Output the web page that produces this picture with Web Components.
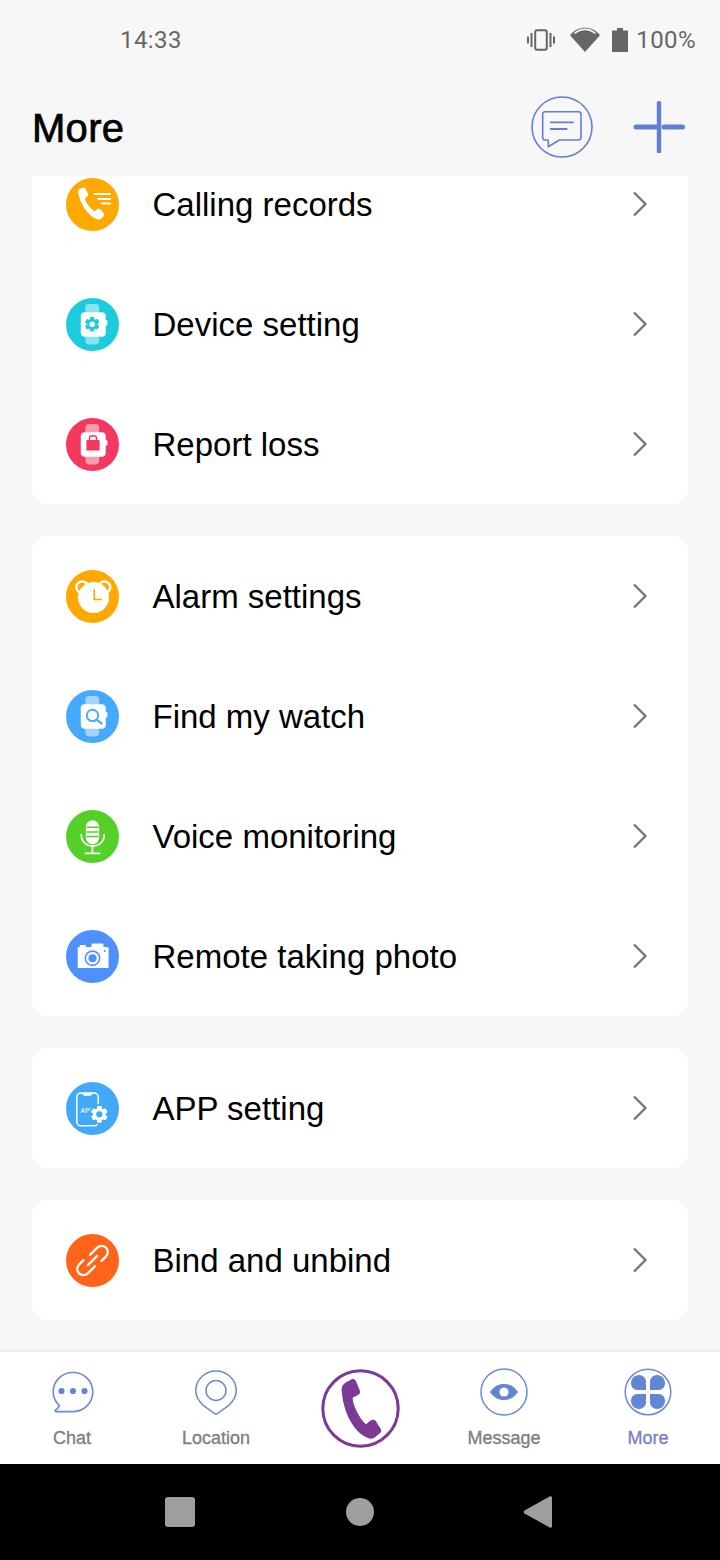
<!DOCTYPE html>
<html>
<head>
<meta charset="utf-8">
<style>
  html, body { margin: 0; padding: 0; background: #f7f7f7; }
  body { font-family: "Liberation Sans", Arial, sans-serif; }
</style>
</head>
<body>
<phone-screen>
  <status-bar slot="status" time="14:33" level="100%"></status-bar>
  <top-header slot="header" heading="More"></top-header>
  <menu-list slot="content" offset="32">
    <menu-card>
      <menu-row icon="calls" label="Calling records"></menu-row>
      <menu-row icon="device" label="Device setting"></menu-row>
      <menu-row icon="loss" label="Report loss"></menu-row>
    </menu-card>
    <menu-card>
      <menu-row icon="alarm" label="Alarm settings"></menu-row>
      <menu-row icon="find" label="Find my watch"></menu-row>
      <menu-row icon="voice" label="Voice monitoring"></menu-row>
      <menu-row icon="photo" label="Remote taking photo"></menu-row>
    </menu-card>
    <menu-card>
      <menu-row icon="app" label="APP setting"></menu-row>
    </menu-card>
    <menu-card>
      <menu-row icon="bind" label="Bind and unbind"></menu-row>
    </menu-card>
  </menu-list>
  <tab-bar slot="tabs">
    <tab-item icon="chat" label="Chat"></tab-item>
    <tab-item icon="location" label="Location"></tab-item>
    <tab-item icon="call"></tab-item>
    <tab-item icon="message" label="Message"></tab-item>
    <tab-item icon="more" label="More" active></tab-item>
  </tab-bar>
  <nav-bar slot="nav"></nav-bar>
</phone-screen>

<script>
const WATCH = (band, body) => `
  <rect x="19" y="6" width="13.5" height="39.5" rx="3.5" fill="${band}"/>
  <rect x="14.5" y="14" width="24.5" height="24" rx="4" fill="#fff"/>
  <rect x="38" y="21.5" width="2.6" height="5.5" rx="1.3" fill="#fff"/>${body}`;

const GEAR = (cx, cy, r, color, hole) => {
  let teeth = '';
  for (let i = 0; i < 6; i++) {
    teeth += `<rect x="${cx - r * 0.36}" y="${cy - r * 1.3}" width="${r * 0.72}" height="${r * 2.6}" rx="${r * 0.14}" fill="${color}" transform="rotate(${i * 60} ${cx} ${cy})"/>`;
  }
  return `${teeth}<circle cx="${cx}" cy="${cy}" r="${r}" fill="${color}"/><circle cx="${cx}" cy="${cy}" r="${r * 0.5}" fill="${hole}"/>`;
};

const MENU_ICONS = {
  calls: ['#ffa800', `
    <g transform="translate(-6 -6) scale(.3333)">
      <path d="M54 62 C52 55 56 50 62 48 L68 46 C72 45 74 47 76 50 L83 65 C84 69 82 71 80 73 L73 78 C77 92 92 110 103 116 L110 109 C113 107 116 107 119 109 L129 122 C131 125 131 128 128 131 L122 137 C118 140 113 141 108 139 C82 128 60 96 54 62 Z" fill="#fff"/>
      <path d="M100 65 H150 M110 80 H150 M122 93 H150" stroke="#fff" stroke-width="6" fill="none"/>
    </g>`],
  device: ['#1ccbdc', WATCH('#8be4ed', GEAR(25.7, 25.7, 5.4, '#1ccbdc', '#fff'))],
  loss: ['#f5385f', WATCH('#fa9cb0', `
    <rect x="20" y="21.5" width="13" height="10.5" rx="1.2" fill="#f5385f"/>
    <path d="M23 22 V20 C23 16.6 30 16.6 30 20 V22" stroke="#f5385f" stroke-width="1.4" fill="none"/>`)],
  alarm: ['#ffa800', `
    <circle cx="16" cy="17" r="5.8" fill="#ffa800" stroke="#fff" stroke-width="2.4"/>
    <circle cx="37.6" cy="17" r="5.8" fill="#ffa800" stroke="#fff" stroke-width="2.4"/>
    <circle cx="27" cy="27" r="15.2" fill="#fff"/>
    <path d="M27.7 19 V29 H35" stroke="#ffa800" stroke-width="1.6" fill="none"/>`],
  find: ['#45aafb', WATCH('#a2d4fd', `
    <circle cx="26" cy="25" r="5.6" fill="none" stroke="#45aafb" stroke-width="1.8"/>
    <path d="M30 29.2 L35 33" stroke="#45aafb" stroke-width="2" stroke-linecap="round"/>`)],
  voice: ['#55d02a', `
    <rect x="19.5" y="10" width="13" height="23.5" rx="6.5" fill="#fff"/>
    <path d="M20 17 H32 M20 21.5 H32 M20 26 H32" stroke="#55d02a" stroke-width="1.5"/>
    <path d="M15 24.5 C15.5 39 37 39 37.5 24.5" stroke="#fff" stroke-width="1.7" fill="none" stroke-linecap="round"/>
    <path d="M26 35 V42.5 M19 42.5 H33" stroke="#fff" stroke-width="1.7" stroke-linecap="round"/>`],
  photo: ['#4d90fe', `
    <path d="M11.5 18 C11.5 17 12 16.7 13 16.7 H25 V14.3 C25 13.8 25.5 13.3 26 13.3 H35.6 C36.2 13.3 36.7 13.8 36.7 14.3 V16.7 H40.5 C41.3 16.7 41.8 17.2 41.8 18 V37.4 H11.5 Z" fill="#fff"/>
    <rect x="13.5" y="14.8" width="6" height="2.4" rx="0.6" fill="#fff"/>
    <circle cx="26" cy="27.7" r="7.8" fill="#4d90fe"/>
    <circle cx="26" cy="27.7" r="6.2" fill="#fff"/>
    <circle cx="26" cy="27.7" r="4" fill="#4d90fe"/>
    <circle cx="38" cy="20.6" r="1" fill="#4d90fe"/>`],
  app: ['#42a9fa', `
    <rect x="10.6" y="10.8" width="21" height="32.2" rx="4" fill="none" stroke="#fff" stroke-width="1.5"/>
    <path d="M16 10.8 H26 C25.6 13.2 24.2 13.6 23.2 13.6 H18.8 C17.8 13.6 16.4 13.2 16 10.8 Z" fill="#fff"/>
    <text x="14.2" y="30.5" font-family="'Liberation Sans', sans-serif" font-size="6.2" font-weight="700" fill="#fff" opacity=".8">APP</text>
    <circle cx="32.7" cy="31.7" r="10" fill="#42a9fa"/>
    ${GEAR(32.7, 31.7, 6.2, '#fff', '#42a9fa')}`],
  bind: ['#ff6418', `
    <path d="M23.5 20.5 L30.4 13.6 C33 11 36.8 11 39.2 13.4 C41.6 15.8 41.6 19.6 39 22.2 L34.8 26.4" fill="none" stroke="#fff" stroke-width="2.2" stroke-linecap="round"/>
    <path d="M28.5 31.5 L21.6 38.4 C19 41 15.2 41 12.8 38.6 C10.4 36.2 10.4 32.4 13 29.8 L17.2 25.6" fill="none" stroke="#fff" stroke-width="2.2" stroke-linecap="round"/>
    <path d="M21.5 30.5 L30.5 21.5" stroke="#fff" stroke-width="2.2" stroke-linecap="round"/>`]
};

const TAB_ICONS = {
  chat: `<svg width="46" height="46" viewBox="0 0 46 46" style="margin-left:2px">
    <path d="M23 3.5 C34 3.5 42.8 12 42.8 23 C42.8 34 34 42.6 23 42.6 H6 C5 42.6 4.8 41.6 5.6 41 C7.2 40 8.6 38.4 9.4 36.6 C5.6 33 3.2 28.4 3.2 23 C3.2 12 12 3.5 23 3.5 Z" fill="none" stroke="#6b8ad6" stroke-width="1.6"/>
    <circle cx="11.5" cy="22" r="3.1" fill="#6484d6"/><circle cx="23" cy="22" r="3.1" fill="#6484d6"/><circle cx="34.5" cy="22" r="3.1" fill="#6484d6"/></svg>`,
  location: `<svg width="46" height="48" viewBox="0 0 46 48">
    <path d="M23 3 C34.2 3 43.2 11.8 43.2 22.6 C43.2 29 40 33.6 35.8 37.4 L24.4 45.6 C23.5 46.2 22.5 46.2 21.6 45.6 L10.2 37.4 C6 33.6 2.8 29 2.8 22.6 C2.8 11.8 11.8 3 23 3 Z" fill="none" stroke="#6b8ad6" stroke-width="1.5"/>
    <circle cx="23" cy="22.5" r="10" fill="none" stroke="#6b8ad6" stroke-width="1.5"/></svg>`,
  call: `<svg width="80" height="80" viewBox="0 0 80 80" style="margin:2px 0 0 2px">
    <circle cx="39.5" cy="39.5" r="37.7" fill="#fff" stroke="#7b3a96" stroke-width="3"/>
    <path transform="translate(-10 -8) scale(.3333)" d="M92 88 C91 76 97 68 108 62 L122 55 C128 53 133 56 135 61 L147 90 C148 95 146 99 142 101 L125 110 C124 130 145 172 165 190 L180 178 C185 175 190 176 194 179 L209 203 C212 208 211 213 207 217 L190 230 C184 234 178 234 170 231 C125 212 96 150 92 88 Z" fill="#7b3a96"/></svg>`,
  message: `<svg width="48" height="48" viewBox="0 0 48 48">
    <circle cx="24" cy="24" r="23" fill="none" stroke="#6b8ad6" stroke-width="1.5"/>
    <path d="M10 24 C13.5 18.6 18.4 16 24 16 C29.6 16 34.5 18.6 38 24 C34.5 29.4 29.6 32 24 32 C18.4 32 13.5 29.4 10 24 Z" fill="#6484d6"/>
    <circle cx="24" cy="24" r="4.6" fill="#fff"/></svg>`,
  more: `<svg width="48" height="48" viewBox="0 0 48 48">
    <circle cx="24" cy="24" r="22.8" fill="none" stroke="#6b8ad6" stroke-width="1.5"/>
    <path d="M22 22 H13.5 C9.5 22 7 19 7 15 C7 10.6 10.6 7 15 7 C19 7 22 10 22 14 Z" fill="#6484d6"/>
    <path d="M26 22 H34.5 C38.5 22 41 19 41 15 C41 10.6 37.4 7 33 7 C29 7 26 10 26 14 Z" fill="#6484d6"/>
    <path d="M22 26 H13.5 C9.5 26 7 29 7 33 C7 37.4 10.6 41 15 41 C19 41 22 38 22 34 Z" fill="#6484d6"/>
    <path d="M26 26 H34.5 C38.5 26 41 29 41 33 C41 37.4 37.4 41 33 41 C29 41 26 38 26 34 Z" fill="#6484d6"/></svg>`
};

class PhoneScreen extends HTMLElement {
  constructor() {
    super();
    this.attachShadow({ mode: 'open' });
    this.shadowRoot.innerHTML = `
      <style>
        :host { display: flex; flex-direction: column; width: 720px; height: 1560px; background: #f7f7f7; overflow: hidden; }
        .content { flex: 1; min-height: 0; display: flex; flex-direction: column; }
      </style>
      <slot name="status"></slot>
      <slot name="header"></slot>
      <div class="content"><slot name="content"></slot></div>
      <slot name="tabs"></slot>
      <slot name="nav"></slot>`;
  }
}

class StatusBar extends HTMLElement {
  constructor() {
    super();
    this.attachShadow({ mode: 'open' });
  }
  connectedCallback() {
    this.shadowRoot.innerHTML = `
      <style>
        :host { display: flex; align-items: center; height: 80px; padding: 0 24px 0 120px; color: #666; font-family: Roboto, sans-serif; font-size: 24px; letter-spacing: .4px; box-sizing: border-box; }
        .time { flex: 1; }
        .icons { display: flex; align-items: center; }
        svg { display: block; }
      </style>
      <span class="time">${this.getAttribute('time')}</span>
      <div class="icons">
        <svg width="28" height="22" viewBox="0 0 28 22" style="margin-right:15px">
          <rect x="8.2" y="1.2" width="11.6" height="19.6" rx="2" fill="none" stroke="#666" stroke-width="2"/>
          <path d="M4.5 4 V18 M1 7.5 V14.5 M23.5 4 V18 M27 7.5 V14.5" stroke="#666" stroke-width="2"/>
        </svg>
        <svg width="30" height="26" viewBox="0 0 30 26" style="margin-right:12px">
          <path d="M15 25 L0 8.2 C8 -1.6 22 -1.6 30 8.2 Z" fill="#666"/>
          <path d="M4.6 6.4 C10.6 1 19.4 1 25.4 6.4" stroke="#f7f7f7" stroke-width="1.6" fill="none"/>
        </svg>
        <svg width="16" height="24" viewBox="0 0 16 24" style="margin-right:8px">
          <path d="M5 0 H11 V2.5 H16 V24 H0 V2.5 H5 Z" fill="#666"/>
        </svg>
        <span>${this.getAttribute('level')}</span>
      </div>`;
  }
}

class TopHeader extends HTMLElement {
  constructor() {
    super();
    this.attachShadow({ mode: 'open' });
  }
  connectedCallback() {
    this.shadowRoot.innerHTML = `
      <style>
        :host { display: flex; align-items: center; height: 96px; padding: 0 35px 0 32px; box-sizing: border-box; }
        h1 { flex: 1; margin: 0; font-size: 40px; font-weight: 400; letter-spacing: .3px; -webkit-text-stroke: .7px #000; color: #000; line-height: 48px; }
        .btns { display: flex; align-items: center; gap: 40px; margin-top: -2px; }
        svg { display: block; }
      </style>
      <h1>${this.getAttribute('heading')}</h1>
      <div class="btns">
        <svg width="62" height="62" viewBox="0 0 62 62">
          <circle cx="31" cy="31" r="30" fill="none" stroke="#5f80d4" stroke-width="1.6"/>
          <path d="M14 15.7 H47.6 C49 15.7 50 16.7 50 18 V41.6 C50 43 49 44 47.6 44 H28.3 L17.3 50.7 V44 H14 C12.7 44 11.7 43 11.7 41.6 V18 C11.7 16.7 12.7 15.7 14 15.7 Z" fill="none" stroke="#5f80d4" stroke-width="1.6" stroke-linejoin="round"/>
          <path d="M19.7 26.3 H42 M19.7 33 H35.7" stroke="#5f80d4" stroke-width="1.8" stroke-linecap="round"/>
        </svg>
        <svg width="52" height="52" viewBox="0 0 52 52">
          <path d="M26 2 V50.5" stroke="#5f80d4" stroke-width="4.4" stroke-linecap="round"/>
          <path d="M3 26 H23 M31 26 H49.5" stroke="#5f80d4" stroke-width="5" stroke-linecap="round"/>
        </svg>
      </div>`;
  }
}

class MenuList extends HTMLElement {
  constructor() {
    super();
    this.attachShadow({ mode: 'open' });
    this.shadowRoot.innerHTML = `
      <style>
        :host { display: block; flex: 1; min-height: 0; overflow: hidden; }
        .inner { display: flex; flex-direction: column; gap: 32px; padding: 0 32px; }
      </style>
      <div class="inner"><slot></slot></div>`;
  }
  connectedCallback() {
    this.shadowRoot.querySelector('.inner').style.marginTop = `-${this.getAttribute('offset') || 0}px`;
  }
}

class MenuCard extends HTMLElement {
  constructor() {
    super();
    this.attachShadow({ mode: 'open' });
    this.shadowRoot.innerHTML = `
      <style>
        :host { display: block; background: #fff; border-radius: 16px; overflow: hidden; }
      </style>
      <slot></slot>`;
  }
}

class MenuRow extends HTMLElement {
  constructor() {
    super();
    this.attachShadow({ mode: 'open' });
  }
  connectedCallback() {
    const [color, glyph] = MENU_ICONS[this.getAttribute('icon')];
    this.shadowRoot.innerHTML = `
      <style>
        :host { display: flex; align-items: center; height: 120px; padding: 0 40px 0 34px; color: #000; font-size: 33px; }
        .label { flex: 1; margin: 2px 0 0 33.5px; }
        svg { display: block; flex: none; }
      </style>
      <svg width="53" height="53" viewBox="0 0 52 52"><circle cx="26" cy="26" r="26" fill="${color}"/>${glyph}</svg>
      <span class="label">${this.getAttribute('label')}</span>
      <svg width="16" height="26" viewBox="0 0 16 26"><path d="M2 1.5 L13.5 13 L2 24.5" fill="none" stroke="#777" stroke-width="2.4"/></svg>`;
  }
}

class TabBar extends HTMLElement {
  constructor() {
    super();
    this.attachShadow({ mode: 'open' });
    this.shadowRoot.innerHTML = `
      <style>
        :host { display: flex; height: 114px; box-sizing: border-box; background: #fff; border-top: 2px solid #eee; }
      </style>
      <slot></slot>`;
  }
}

class TabItem extends HTMLElement {
  constructor() {
    super();
    this.attachShadow({ mode: 'open' });
  }
  connectedCallback() {
    const label = this.getAttribute('label');
    this.shadowRoot.innerHTML = `
      <style>
        :host { flex: 1; display: flex; flex-direction: column; align-items: center; justify-content: ${label ? 'flex-start' : 'center'}; color: #808080; font-size: 18px; -webkit-text-stroke: .35px currentColor; }
        :host([active]) { color: #7b7fc9; }
        .ic { height: 64px; display: flex; align-items: center; justify-content: center; margin-top: 8px; }
        span { line-height: 24px; margin-top: 2px; }
        svg { display: block; }
      </style>
      ${label ? `<div class="ic">${TAB_ICONS[this.getAttribute('icon')]}</div><span>${label}</span>` : TAB_ICONS[this.getAttribute('icon')]}`;
  }
}

class NavBar extends HTMLElement {
  constructor() {
    super();
    this.attachShadow({ mode: 'open' });
    this.shadowRoot.innerHTML = `
      <style>
        :host { display: flex; align-items: center; justify-content: space-between; height: 96px; padding: 0 167px 0 165px; background: #000; box-sizing: border-box; }
        .sq { width: 30px; height: 30px; border-radius: 3px; background: #9e9e9e; }
        .ci { width: 28px; height: 28px; border-radius: 50%; background: #9e9e9e; margin-left: 2px; }
        svg { display: block; }
      </style>
      <div class="sq"></div>
      <div class="ci"></div>
      <svg width="30" height="32" viewBox="0 0 30 32"><path d="M1.5 14.6 L26.6 0.6 C28 0 29 .6 29 2 V30 C29 31.4 28 32 26.6 31.4 L1.5 17.4 C.4 16.6 .4 15.4 1.5 14.6 Z" fill="#9e9e9e"/></svg>`;
  }
}

customElements.define('phone-screen', PhoneScreen);
customElements.define('status-bar', StatusBar);
customElements.define('top-header', TopHeader);
customElements.define('menu-list', MenuList);
customElements.define('menu-card', MenuCard);
customElements.define('menu-row', MenuRow);
customElements.define('tab-bar', TabBar);
customElements.define('tab-item', TabItem);
customElements.define('nav-bar', NavBar);
</script>
</body>
</html>
